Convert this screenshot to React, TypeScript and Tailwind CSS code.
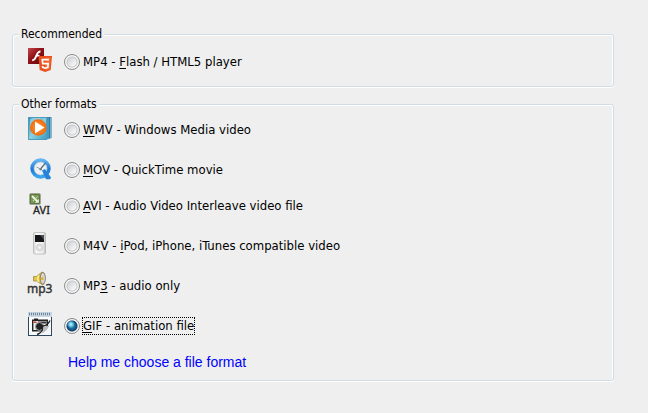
import { useState } from "react";
import type { ReactNode } from "react";
import clsx from "clsx";

interface Format {
  id: string;
  /** Label text; the character between underscores is the access key */
  label: string;
  icon: ReactNode;
}

function FlashHtml5Icon() {
  return (
    <svg viewBox="0 0 24 24" className="size-6">
      <defs>
        <linearGradient id="flash" x1="0" y1="0" x2="1" y2="1">
          <stop offset="0" stopColor="#c2484c" />
          <stop offset="0.4" stopColor="#95141b" />
          <stop offset="1" stopColor="#5d0509" />
        </linearGradient>
      </defs>
      <rect x="0" y="0" width="16" height="16" fill="url(#flash)" />
      <path d="M12.500 3.500C9.500 3.500 9 6 8 8.500c-.8 2.200-1.500 3.700-3.800 3.800" fill="none" stroke="#fff" strokeWidth="1.900" />
      <path d="M8 7.700h3.500" stroke="#fff" strokeWidth="1.700" />
      <path d="M10.500 8H24l-1.300 14-5.500 2-5.500-2z" fill="#e8501f" />
      <path d="M17.300 9.200h5.400l-1.100 11.900-4.300 1.400z" fill="#f4692f" />
      <path d="M21 11.700h-6.700l.4 4h5.500l-.4 3.600-2.500.9-2.600-.9-.1-1.300" fill="none" stroke="#fff" strokeWidth="1.700" />
    </svg>
  );
}

function WmvIcon() {
  return (
    <svg viewBox="0 0 24 24" className="size-6">
      <defs>
        <linearGradient id="wmv-back" x1="0" y1="0" x2="1" y2="1">
          <stop offset="0" stopColor="#2a86b8" />
          <stop offset="0.5" stopColor="#8fd0df" />
          <stop offset="1" stopColor="#2f9bc0" />
        </linearGradient>
        <radialGradient id="wmv-disc">
          <stop offset="0" stopColor="#ff9a3c" />
          <stop offset="1" stopColor="#f06a0c" />
        </radialGradient>
      </defs>
      <path d="M17 1h6.500v21L17 24z" fill="#287aa8" />
      <path d="M20 1.500V23M22.500 1.500V22" stroke="#85c3dc" strokeWidth=".8" />
      <path d="M0 1h19v23H0z" fill="url(#wmv-back)" />
      <path d="M.5 1.500h18v22H.5z" fill="none" stroke="#4a9cc0" />
      <path d="M2 3l3-1h8L2 12z" fill="#b9e4ec" opacity=".6" />
      <circle cx="10.300" cy="11.500" r="8.300" fill="url(#wmv-disc)" />
      <path d="M7 5.500v12l9.500-6z" fill="#fff" />
    </svg>
  );
}

function QuickTimeIcon() {
  return (
    <svg viewBox="0 0 24 24" className="size-6">
      <defs>
        <linearGradient id="qt" x1="0" y1="0" x2="0" y2="1">
          <stop offset="0" stopColor="#62b4f2" />
          <stop offset="0.55" stopColor="#1c78d2" />
          <stop offset="1" stopColor="#3ba6ee" />
        </linearGradient>
      </defs>
      <circle cx="12.500" cy="12.500" r="8.300" fill="#edf1f5" stroke="url(#qt)" strokeWidth="3.800" />
      <circle cx="12.500" cy="12.500" r="6.400" fill="none" stroke="#c2d0dc" strokeWidth=".8" />
      <path d="M14 14.500l3-1.500 6 8.500-.8 1.700H18z" fill="#2583d9" />
      <path d="M12.500 13l5-6" stroke="#5d6a76" strokeWidth="1.200" />
      <path d="M8.500 11l4 2" stroke="#98a4ae" strokeWidth="1" />
      <circle cx="12.700" cy="13.200" r="1.300" fill="#6d8497" />
    </svg>
  );
}

function AviIcon() {
  return (
    <svg viewBox="0 0 24 24" className="size-6 overflow-visible">
      <rect x="1.500" y="1.500" width="11" height="11" rx="1.500" fill="#5d7540" stroke="#a2a99a" />
      <path d="M3 3h8v3L6 11H3z" fill="#7a9c52" />
      <path d="M4 4l5 5" stroke="#f2f6eb" strokeWidth="1.800" />
      <path d="M9.500 4.500L5 9" stroke="#cfdcbd" strokeWidth="1" />
      <path d="M10.800 10.800V6.800L6.800 10.800z" fill="#f2f6eb" />
      <text x="5" y="22" fontSize="11" fill="#222" stroke="#222" strokeWidth=".3" fontFamily="Noto Sans, sans-serif">
        AVI
      </text>
    </svg>
  );
}

function IpodIcon() {
  return (
    <svg viewBox="0 0 24 24" className="size-6">
      <defs>
        <linearGradient id="ipod" x1="0" y1="0" x2="1" y2="0">
          <stop offset="0" stopColor="#cfcfcf" />
          <stop offset="0.25" stopColor="#fafafa" />
          <stop offset="0.8" stopColor="#ececec" />
          <stop offset="1" stopColor="#b8b8b8" />
        </linearGradient>
      </defs>
      <rect x="5.500" y=".5" width="12" height="21.500" rx="1.500" fill="url(#ipod)" stroke="#b8b8b8" strokeWidth=".8" />
      <path d="M7 3h9v7H7z" fill="#15161a" />
      <path d="M12 3h4v5z" fill="#4b4d55" />
      <circle cx="11.500" cy="15.500" r="3.500" fill="#dcdcdc" stroke="#cbcbcb" strokeWidth=".6" />
      <circle cx="11.500" cy="15.500" r="1.300" fill="#f7f7f7" />
    </svg>
  );
}

function Mp3Icon() {
  return (
    <svg viewBox="0 0 24 24" className="size-6 overflow-visible">
      <path d="M5.500 4.500h3l5.500-4.500 2 1v11L14 12.500 8.500 9h-3z" fill="#e8c544" stroke="#a08c3e" strokeWidth=".8" />
      <path d="M10.500 3.500c-1 2-1 4.500 0 6.500" fill="none" stroke="#fff0a0" strokeWidth="1.500" />
      <ellipse cx="14.800" cy="6.300" rx="2.600" ry="5.800" fill="#d9d7d0" stroke="#6f6b5c" strokeWidth=".8" />
      <circle cx="14.300" cy="6.500" r="1.500" fill="#e0b72c" />
      <text x="-1" y="21" fontSize="12" fill="#333" stroke="#333" strokeWidth=".4" fontFamily="Noto Sans, sans-serif">
        mp3
      </text>
    </svg>
  );
}

function GifIcon() {
  return (
    <svg viewBox="0 0 24 24" className="size-6">
      <rect x=".5" y="2.500" width="23" height="21" fill="#fafcfd" stroke="#2c4862" />
      <rect x="0" y="0" width="24" height="5" fill="#c9d6e3" />
      <path d="M1 2h22" stroke="#6f8699" strokeWidth="2.500" strokeDasharray="1 1" />
      <path d="M6 6.500h4v2H6z" fill="#222" />
      <path d="M4.700 8.200h14.600v10.600H4.700z" fill="#eceded" stroke="#222" strokeWidth="1.400" />
      <path d="M5.500 9.500h3v1.500h-3z" fill="#d23c2a" />
      <path d="M10 9.500h8.500v2H10z" fill="#333" />
      <circle cx="11.500" cy="14.500" r="4" fill="#222" stroke="#a9adb0" />
      <path d="M23 9v14H9c4-1 6-3.500 6-7.500 3.500 0 6.500-2 8-6.500z" fill="#f5f7f8" />
      <path d="M22 8.500c-1.500 3.500-4 5.500-7.500 5.500 1 3.500-1 7-5.500 8.500" fill="none" stroke="#222" strokeWidth="1.400" />
      <path d="M15.300 15c.7 2.500-.3 5-2.800 6.800 4.500-1.300 7.500-4.300 9-9-1.700 1.500-3.700 2.200-6.200 2.200z" fill="#b7bcc0" />
    </svg>
  );
}

const RECOMMENDED: Format[] = [
  { id: "mp4", label: "MP4 - _F_lash / HTML5 player", icon: <FlashHtml5Icon /> },
];

// Grouped the way the dialog spaces them: Windows and QuickTime first, then the rest
const OTHER_GROUPS: Format[][] = [
  [
    { id: "wmv", label: "_W_MV - Windows Media video", icon: <WmvIcon /> },
    { id: "mov", label: "_M_OV - QuickTime movie", icon: <QuickTimeIcon /> },
  ],
  [
    { id: "avi", label: "_A_VI - Audio Video Interleave video file", icon: <AviIcon /> },
    { id: "m4v", label: "M4V - _i_Pod, iPhone, iTunes compatible video", icon: <IpodIcon /> },
    { id: "mp3", label: "MP_3_ - audio only", icon: <Mp3Icon /> },
    { id: "gif", label: "_G_IF - animation file", icon: <GifIcon /> },
  ],
];

interface FormatRowProps {
  format: Format;
  selected: boolean;
  onSelect: (id: string) => void;
}

function FormatRow({ format, selected, onSelect }: FormatRowProps) {
  const [before, key, after] = format.label.split("_");

  return (
    <div className="flex h-9 items-center">
      <span className="mr-3 shrink-0 self-start pt-1" aria-hidden="true">
        {format.icon}
      </span>
      <input
        type="radio"
        name="format"
        id={format.id}
        checked={selected}
        onChange={() => onSelect(format.id)}
        className={clsx(
          "mr-0.5 size-4 shrink-0 appearance-none rounded-full border border-[#8a8b8c] outline-none",
          selected
            ? "bg-[radial-gradient(circle_at_42%_38%,#d4f7ff_0,#62c4ea_2px,transparent_4px),radial-gradient(circle_at_50%_50%,#2583b8_0,#1b6595_3px,#123f68_5px,#f4f4f4_6px)]"
            : "bg-[radial-gradient(circle_at_50%_50%,transparent_4px,#c6c8cb_5px,#f6f6f6_6px),linear-gradient(135deg,#ccd0d5_20%,#f6f6f7_70%)]"
        )}
      />
      <label
        htmlFor={format.id}
        className={clsx(
          "border border-dotted text-[13px] leading-4",
          selected ? "border-black" : "border-transparent"
        )}
      >
        {before}
        <span className="underline underline-offset-2">{key}</span>
        {after}
      </label>
    </div>
  );
}

function FormatGroup({ title, className, children }: { title: string; className?: string; children: ReactNode }) {
  return (
    <fieldset
      className={clsx(
        "min-w-0 rounded-[3px] border border-[#d0dce6] pl-[15px] shadow-[inset_1px_1px_0_#fff,inset_-1px_0_0_#fff,0_1px_0_#fff]",
        className
      )}
    >
      <legend className="-ml-[9px] bg-[#efefef] px-0.5 text-[12px] leading-4">{title}</legend>
      {children}
    </fieldset>
  );
}

export default function App() {
  const [selected, setSelected] = useState("gif");

  return (
    <main className="min-h-screen bg-[#efefef] pt-[26px] pr-[34px] pb-8 pl-3 font-['DejaVu_Sans_Condensed','DejaVu_Sans',sans-serif] text-black">
      <form className="flex flex-col gap-[9px]">
        <FormatGroup title="Recommended" className="pt-0.5 pb-1.5">
          {RECOMMENDED.map((format) => (
            <FormatRow
              key={format.id}
              format={format}
              selected={selected === format.id}
              onSelect={setSelected}
            />
          ))}
        </FormatGroup>

        <FormatGroup title="Other formats">
          {OTHER_GROUPS.map((group) => (
            <div key={group[0].id} className="flex flex-col gap-1">
              {group.map((format) => (
                <FormatRow
                  key={format.id}
                  format={format}
                  selected={selected === format.id}
                  onSelect={setSelected}
                />
              ))}
            </div>
          ))}
          <div className="flex h-9 items-center pl-10">
            <a
              href="#formats"
              className="font-['Liberation_Sans',Arial,sans-serif] text-[14px] leading-4 text-[#0000ff]"
            >
              Help me choose a file format
            </a>
          </div>
        </FormatGroup>
      </form>
    </main>
  );
}
